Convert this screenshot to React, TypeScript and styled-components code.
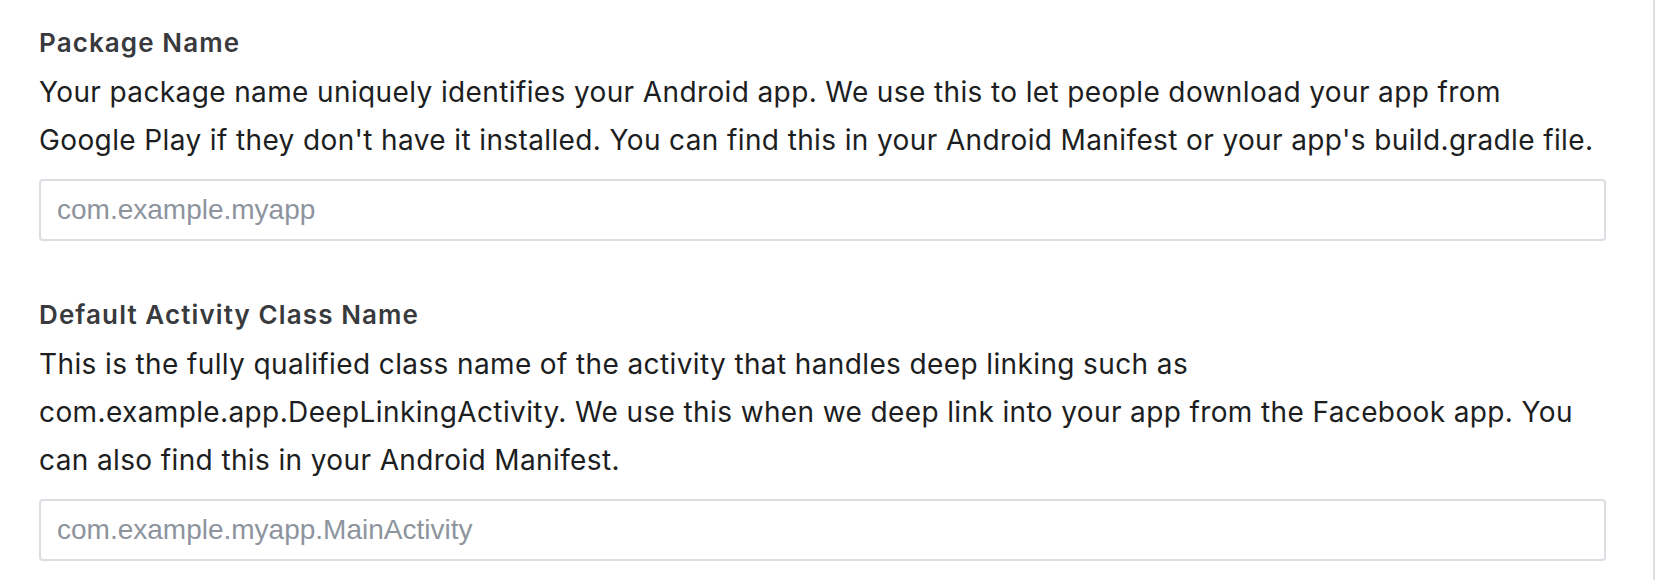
import styled, { createGlobalStyle } from 'styled-components'

const GlobalStyle = createGlobalStyle`
  html, body {
    margin: 0;
    padding: 0;
    background: #ffffff;
  }
`

type Field = {
  label: string
  description: string
  placeholder: string
}

const fields: Field[] = [
  {
    label: 'Package Name',
    description:
      "Your package name uniquely identifies your Android app. We use this to let people download your app from Google Play if they don't have it installed. You can find this in your Android Manifest or your app's build.gradle file.",
    placeholder: 'com.example.myapp',
  },
  {
    label: 'Default Activity Class Name',
    description:
      'This is the fully qualified class name of the activity that handles deep linking such as com.example.app.DeepLinkingActivity. We use this when we deep link into your app from the Facebook app. You can also find this in your Android Manifest.',
    placeholder: 'com.example.myapp.MainActivity',
  },
]

export default function App() {
  return (
    <>
      <GlobalStyle />
      <Page>
        <Panel>
          {fields.map((field) => (
            <FieldGroup key={field.label}>
              <Label>{field.label}</Label>
              <Description>{field.description}</Description>
              <TextInput type="text" placeholder={field.placeholder} />
            </FieldGroup>
          ))}
        </Panel>
      </Page>
    </>
  )
}

const Page = styled.div`
  display: flex;
  width: 1676px;
  height: 580px;
  overflow: hidden;
  background: #ffffff;
`

const Panel = styled.div`
  display: flex;
  flex-direction: column;
  gap: 58px;
  width: 1655px;
  box-sizing: border-box;
  padding: 27px 48px 0 39px;
  border-right: 2px solid #dddfe2;
`

const FieldGroup = styled.div`
  display: flex;
  flex-direction: column;
`

const Label = styled.div`
  font-family: Inter, 'Noto Sans', sans-serif;
  font-size: 26px;
  font-weight: 600;
  letter-spacing: 1.1px;
  line-height: 32px;
  color: #383a3e;
  margin-bottom: 9px;
`

const Description = styled.p`
  width: 1560px;
  margin: 0 0 15px;
  font-family: Inter, 'Noto Sans', sans-serif;
  font-size: 28px;
  font-weight: 400;
  letter-spacing: 0.38px;
  line-height: 48px;
  color: #1c1e21;
`

const TextInput = styled.input`
  box-sizing: border-box;
  width: 1567px;
  height: 62px;
  padding: 0 16px;
  border: 2px solid #dadde1;
  border-radius: 4px;
  background: #ffffff;
  font-family: 'Liberation Sans', Arial, sans-serif;
  font-size: 28px;
  color: #1c1e21;
  outline: none;

  &::placeholder {
    color: #8d949e;
  }
`
